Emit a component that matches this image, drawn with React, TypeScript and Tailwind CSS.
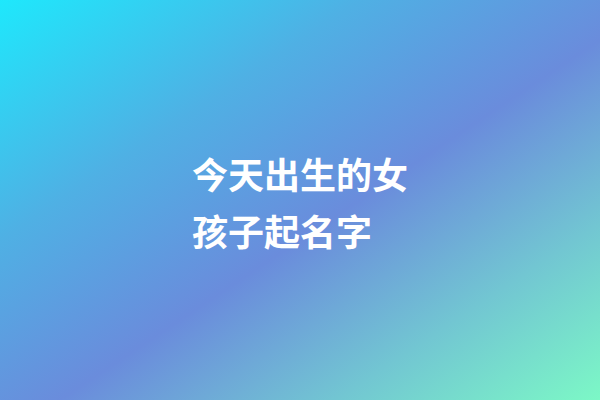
export default function App() {
  return (
    <div className="flex h-[400px] w-[600px] items-center justify-center bg-[linear-gradient(to_bottom_right,#1ee8fc_0%,#4fb0e4_30%,#6a8cdc_55%,#72c6d2_78%,#7cf8c6_100%)]">
      <div
        className="flex flex-col pt-[4px] text-[36px] font-bold leading-[57px] text-white"
        style={{ fontFamily: '"Noto Sans CJK SC", "Noto Sans", sans-serif' }}
      >
        <span>今天出生的女</span>
        <span>孩子起名字</span>
      </div>
    </div>
  );
}
